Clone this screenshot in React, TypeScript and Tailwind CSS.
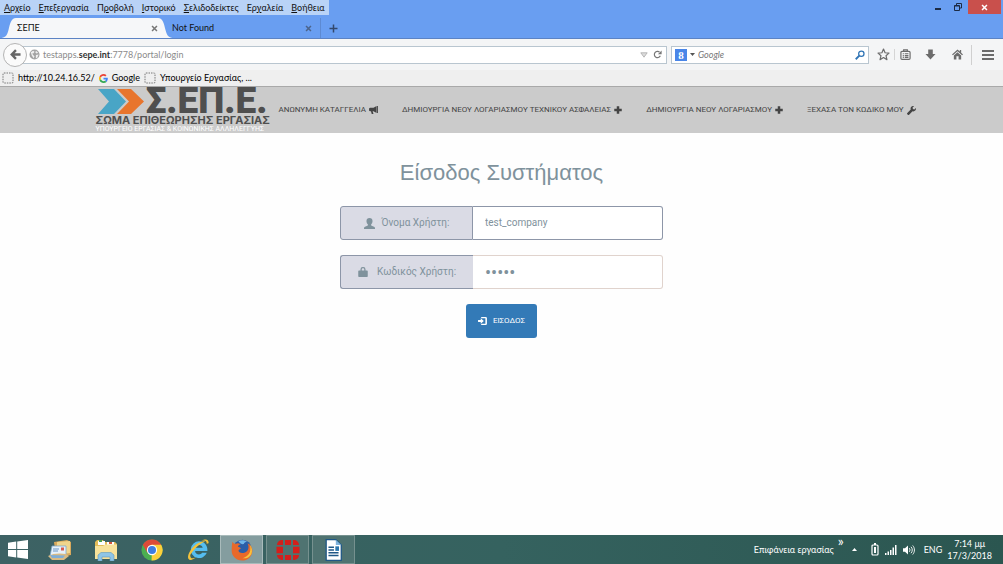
import React, { useState } from 'react';

interface IconProps {
    className?: string;
}

const MENU = [
    ['', 'Α', 'ρχείο'],
    ['', 'Ε', 'πεξεργασία'],
    ['Π', 'ρ', 'οβολή'],
    ['', 'Ι', 'στορικό'],
    ['', 'Σ', 'ελιδοδείκτες'],
    ['Ερ', 'γ', 'αλεία'],
    ['', 'Β', 'οήθεια'],
];

/* ---------- page icons ---------- */

const BullhornIcon = ({ className }: IconProps) => (
    <svg viewBox="0 0 20 18" className={className} fill="currentColor">
        <path d="M17 0v16L10 12H8l2 6H6L4.300 12H2.500A2.500 2.500 0 0 1 0 9.500V6.500a2.500 2.500 0 0 1 2.500-2.500H10z" />
        <path d="M18 0h2v16h-2z" />
    </svg>
);

const PlusIcon = ({ className }: IconProps) => (
    <svg viewBox="0 0 16 16" className={className} fill="currentColor">
        <path d="M5.500 0.500h5v5h5v5h-5v5h-5v-5h-5v-5h5z" />
    </svg>
);

const WrenchIcon = ({ className }: IconProps) => (
    <svg viewBox="0 0 20 20" className={className} fill="currentColor">
        <path d="M19.600 4.200 16.300 7.500l-3.200-.8-.7-3.200L15.600.300a5.800 5.800 0 0 0-7.300 7.400L.700 15.300a2 2 0 0 0 0 2.800l1.200 1.200a2 2 0 0 0 2.800 0l7.600-7.600a5.800 5.800 0 0 0 7.300-7.500z" />
    </svg>
);

const UserIcon = ({ className }: IconProps) => (
    <svg viewBox="0 0 20 20" className={className} fill="currentColor">
        <path d="M10 0c3.500 0 5.500 2 5.500 5.300 0 2.600-1 5-2.500 6.200v1.300c0 .7.300 1 .9 1.300l4.300 1.900c1.200.6 1.800 1.300 1.800 2.500V20H0v-1.500c0-1.200.6-1.900 1.800-2.500l4.300-1.900c.6-.3.900-.6.900-1.300v-1.300C5.500 10.300 4.500 7.900 4.500 5.300 4.500 2 6.500 0 10 0z" />
    </svg>
);

const LockIcon = ({ className }: IconProps) => (
    <svg viewBox="0 0 20 20" className={className} fill="currentColor">
        <path d="M5 7V4.500A4.500 4.500 0 0 1 9.500 0h1A4.500 4.500 0 0 1 15 4.500V7h3a1.500 1.500 0 0 1 1.500 1.500v10A1.500 1.500 0 0 1 18 20H2a1.500 1.500 0 0 1-1.500-1.500v-10A1.500 1.500 0 0 1 2 7zm2.500 0h5V4.500a2 2 0 0 0-2-2h-1a2 2 0 0 0-2 2z" />
    </svg>
);

const LoginIcon = ({ className }: IconProps) => (
    <svg viewBox="0 0 20 18" className={className} fill="currentColor">
        <path d="M7 0h10a3 3 0 0 1 3 3v12a3 3 0 0 1-3 3H7v-3h9.500V3H7z" />
        <path d="M0 7h6V3l7 6-7 6v-4H0z" />
    </svg>
);

/* ---------- browser icons ---------- */

const CloseIcon = ({ className }: IconProps) => (
    <svg viewBox="0 0 10 10" className={className} stroke="currentColor" strokeWidth="2.200" fill="none">
        <path d="M1.500 1.500l7 7M8.500 1.500l-7 7" />
    </svg>
);

const BackIcon = ({ className }: IconProps) => (
    <svg viewBox="0 0 12 12" className={className} stroke="currentColor" strokeWidth="2.600" fill="none">
        <path d="M11.500 6H2.500M6.500 1.300 1.900 6l4.600 4.700" />
    </svg>
);

const GlobeIcon = ({ className }: IconProps) => (
    <svg viewBox="0 0 12 12" className={className}>
        <circle cx="6" cy="6" r="5.500" fill="#a3a3a3" />
        <path d="M2 3.500l2.500-1.500 1.500 1-1 1.500-1.500.5 1 1.500 1.500 1.500-1 2L3 7zM7.500 2l2.500 2-1.500 1-1.500-1zM7.500 6.500l3-.5-1.500 3.500-1.500.5z" fill="#efefef" />
    </svg>
);

const ReloadIcon = ({ className }: IconProps) => (
    <svg viewBox="0 0 12 12" className={className} stroke="currentColor" strokeWidth="1.600" fill="none">
        <path d="M9.800 7.800A4.200 4.200 0 1 1 8.800 2.800" />
        <path d="M11.500.500v5h-5z" fill="currentColor" stroke="none" />
    </svg>
);

const SearchIcon = ({ className }: IconProps) => (
    <svg viewBox="0 0 12 12" className={className} stroke="currentColor" fill="none">
        <circle cx="7.600" cy="4.400" r="3.200" strokeWidth="1.500" />
        <path d="M5.200 6.800.900 11.100" strokeWidth="2.200" />
    </svg>
);

const StarIcon = ({ className }: IconProps) => (
    <svg viewBox="0 0 14 14" className={className} stroke="currentColor" strokeWidth="1.300" fill="none" strokeLinejoin="round">
        <path d="M7 1.200l1.700 3.900 4.200.4-3.200 2.800 1 4.200L7 10.300l-3.700 2.200 1-4.200L1.100 5.500l4.200-.4z" />
    </svg>
);

const ClipboardIcon = ({ className }: IconProps) => (
    <svg viewBox="0 0 12 12" className={className} stroke="currentColor" strokeWidth="1.300" fill="none">
        <rect x="1" y="2.500" width="10" height="8.800" rx="1.200" />
        <path d="M4 2.500V1h4v1.500M3 5.200h1.200M5.200 5.200H9.200M3 7.200h1.200M5.200 7.200H9.200M3 9.200h1.200M5.200 9.200H9.200" />
    </svg>
);

const DownloadIcon = ({ className }: IconProps) => (
    <svg viewBox="0 0 12 12" className={className} fill="currentColor">
        <path d="M3.500 .500h5v5h3L6 11.500.500 5.500h3z" />
    </svg>
);

const HomeIcon = ({ className }: IconProps) => (
    <svg viewBox="0 0 12 12" className={className} fill="currentColor">
        <path d="M6 .500l2.500 2.300V1.200h1.500V4.200L12 6l-1 .9L6 2.400 1 6.900 0 6z" />
        <path d="M2 7l4-3.500L10 7v4.500H7.200V8H4.800v3.500H2z" />
    </svg>
);

const GoogleG = ({ className }: IconProps) => (
    <svg viewBox="0 0 48 48" className={className}>
        <path fill="#ea4335" d="M24 9.500c3.500 0 6.700 1.200 9.200 3.600l6.900-6.900C35.900 2.400 30.500 0 24 0 14.600 0 6.500 5.400 2.600 13.200l8 6.200C12.400 13.700 17.700 9.500 24 9.500z" />
        <path fill="#4285f4" d="M47 24.600c0-1.600-.2-3.100-.4-4.600H24v9h12.900c-.6 3-2.200 5.500-4.700 7.200l7.700 6C44.400 38 47 31.800 47 24.600z" />
        <path fill="#fbbc05" d="M10.500 28.600a14.500 14.500 0 0 1 0-9.200l-8-6.200a24 24 0 0 0 0 21.600z" />
        <path fill="#34a853" d="M24 48c6.500 0 11.900-2.100 15.900-5.800l-7.700-6c-2.200 1.500-4.900 2.300-8.200 2.300-6.300 0-11.600-4.200-13.500-9.900l-8 6.200C6.500 42.600 14.600 48 24 48z" />
    </svg>
);

const BlankSiteIcon = () => (
    <svg viewBox="0 0 12 12" className="size-3 shrink-0">
        <rect x="1" y="1" width="10" height="10" rx="1" fill="none" stroke="#777" strokeDasharray="1.500 1" />
    </svg>
);

/* ---------- taskbar icons ---------- */

const WindowsIcon = () => (
    <svg viewBox="0 0 20 19" className="h-[19px] w-5" fill="#fff">
        <path d="M0 2.800 8.200 1.600v7.500H0zM9.200 1.500 20 0v9.100H9.200zM0 10h8.200v7.500L0 16.300zM9.200 10H20v9L9.200 17.500z" />
    </svg>
);

const MailIcon = () => (
    <svg viewBox="0 0 24 20" className="h-5 w-6">
        <path d="M6 2l13-2 4 2v13l-15 3z" fill="#d9a95c" />
        <path d="M9 2l13-1v12L9 15z" fill="#f0d58c" />
        <path d="M4 6l14 0v10H2z" fill="#e6f1fa" stroke="#7da7cc" strokeWidth=".8" />
        <path d="M5 9h6M5 11h5" stroke="#6b96c6" />
        <rect x="13" y="7.500" width="3" height="3" fill="#d95a50" />
        <path d="M0 16c5-3 13-3 18-2l3 2-5 4H4z" fill="#d9bb84" />
        <path d="M2 15l15 .5-2 2.500H4z" fill="#80aed6" />
    </svg>
);

const ExplorerIcon = () => (
    <svg viewBox="0 0 24 22" className="h-[22px] w-6">
        <path d="M1 3l2-2h6l1 2h11l2 2v15H1z" fill="#e4bd59" />
        <path d="M4 2h7v4H4zM13 3h7v4h-7z" fill="#fff" />
        <path d="M5 1h3v2H5z" fill="#4aa34f" />
        <path d="M15 3h3v2h-3z" fill="#d3563e" />
        <path d="M1 7h8l2-1.500h12V20H1z" fill="#f8e29a" />
        <path d="M4 22v-6l3-2.500h10l3 2.500v6h-4v-4H8v4z" fill="#8fc5e6" stroke="#5e98bd" strokeWidth=".6" />
    </svg>
);

const ChromeIcon = () => (
    <svg viewBox="0 0 24 24" className="size-[22px]">
        <circle cx="12" cy="12" r="11.500" fill="#4caf50" />
        <path d="M12 12 2 6.300A11.500 11.500 0 0 1 22 6.200z" fill="#dd4b39" />
        <path d="M12 12V6.200h10A11.500 11.500 0 0 1 11.500 23.500z" fill="#fcd03b" />
        <path d="M2 6.300l5 8.600L12 12V6.200z" fill="#dd4b39" />
        <circle cx="12" cy="12" r="5.600" fill="#fff" />
        <circle cx="12" cy="12" r="4.400" fill="#3f7de0" />
    </svg>
);

const ExplorerEIcon = () => (
    <svg viewBox="0 0 24 24" className="size-[23px]">
        <path d="M12.500 3.500a8.700 8.700 0 1 0 8.200 12h-4.900c-.8 1.100-1.900 1.600-3.300 1.600-2.300 0-3.900-1.400-4.100-3.600H21.300c.4-5.700-3.200-10-8.800-10zM8.500 10.300c.4-1.900 1.900-3 4-3s3.600 1.100 3.900 3z" fill="#55bdf0" />
        <path d="M22.500 5.500C23 1.500 19.500.500 15 3c3.500-1 5.800-.4 5.500 3M3 14C-.500 20 1 24 5 22.600c1.500-.5 3-1.300 4.500-2.500-4 2-6.600 1.200-6-2.600C9 9 15 4.500 20 3c-7 0-14 5-17 11z" fill="#f2c23c" />
    </svg>
);

const FirefoxIcon = () => (
    <svg viewBox="0 0 24 24" className="size-[22px]">
        <circle cx="12.500" cy="10.500" r="9.800" fill="#2b5da8" />
        <path d="M8 2.500c3-1.800 7-1.500 9.500.5-2 0-3 1-3.500 2.500-2 .5-4-.5-6-3z" fill="#6fb4e8" />
        <path d="M1.500 3c.8 1.500 2 2.300 3.600 2.200C7 4.300 9 4.500 10.500 6c-1.800.3-2.800 1-3 2.500 1.500.3 3 1 3.300 2.200-1.200.3-2.500 1-2.600 2.300.8 2.600 5.500 3 8.800.5 2.700-2.300 2.600-6 1-9C21.500 6 23.500 9.500 23.300 13c-.4 6-5 10.500-11.300 10.500C5.500 23.500.700 18.500.700 12.500c0-3.500.3-6.500.8-9.500z" fill="#e8692a" />
        <path d="M20.500 6c2.500 3.500 3 7 1.700 10.500-2 3.500-5.700 5-9.700 4.500 4.500-1.500 8-4.500 8.500-8.500.3-2.300.2-4.500-.5-6.500z" fill="#f9c23c" />
    </svg>
);

const RedGridIcon = () => (
    <svg viewBox="0 0 24 22" className="h-[22px] w-6" fill="#d51f1b">
        <path d="M1 6a5 5 0 0 1 5-5h1v5H1zM9 1h6v5H9zM17 1h1a5 5 0 0 1 5 5h-6zM.500 7.700H7v6.600H.500zM17 7.700h6.500v6.600H17zM1 16h6v5H6a5 5 0 0 1-5-5zM9 16h6v5H9zM17 16h6a5 5 0 0 1-5 5h-1z" />
    </svg>
);

const WriterIcon = () => (
    <svg viewBox="0 0 20 24" className="h-[22px] w-[19px]">
        <path d="M2 .700h10.500L18.500 6.500v16.800H2z" fill="#fff" stroke="#1f5786" strokeWidth="1.400" />
        <path d="M12.500.700v5.800h6z" fill="#7fb3dc" />
        <path d="M4.500 9h6M4.500 12h6M4.500 15h11M4.500 18h11" stroke="#1f5786" strokeWidth="1.500" />
        <path d="M12 8h4v5h-4z" fill="#2c77ad" />
    </svg>
);

const BatteryIcon = () => (
    <svg viewBox="0 0 8 13" className="h-[13px] w-2">
        <rect x="1" y="2" width="6" height="10" rx="1" fill="none" stroke="#fff" strokeWidth="1.200" />
        <path d="M3 0h2v2H3zM3 4h2v6H3z" fill="#fff" />
    </svg>
);

const SignalIcon = () => (
    <svg viewBox="0 0 12 10" className="h-[10px] w-3" fill="#fff">
        <path d="M0 8h1.500v2H0zM2.500 6.500H4V10H2.500zM5 5h1.500v5H5zM7.500 2.500H9V10H7.500zM10 0h1.500v10H10z" />
    </svg>
);

const SpeakerIcon = () => (
    <svg viewBox="0 0 12 10" className="h-[10px] w-3">
        <path d="M0 3.200h2L5 .500v9L2 6.800H0z" fill="#fff" />
        <path d="M6.300 3.200c.9 1 .9 2.600 0 3.600M8 1.800c1.700 1.800 1.700 4.600 0 6.400M9.700.500c2.300 2.600 2.300 6.400 0 9" stroke="#fff" fill="none" strokeWidth=".9" />
    </svg>
);

/* ---------- sections ---------- */

const TitleArea = () => (
    <div className="border-b border-[#5c83c4] bg-[#699ef1]">
        <div className="flex h-[15px] items-start justify-between">
            <div className="flex h-[15px] items-center gap-2 bg-[#b9d3f7] pr-1 pl-1">
                {MENU.map(([before, key, after]) => (
                    <button key={after} type="button" className="whitespace-nowrap">
                        {before}
                        <u>{key}</u>
                        {after}
                    </button>
                ))}
            </div>
            <div className="flex">
                <button type="button" aria-label="Ελαχιστοποίηση" className="flex h-[14px] w-5 items-center justify-center">
                    <span className="mt-1 h-[2px] w-[6px] bg-[#1c2b44]" />
                </button>
                <button type="button" aria-label="Επαναφορά" className="flex h-[14px] w-5 items-center justify-center">
                    <svg viewBox="0 0 8 8" className="size-2" fill="none" stroke="#1c2b44">
                        <path d="M2.500 2V.500h5v4.500H6M.500 2.500H5.500v5h-5zM.500 3h5" />
                    </svg>
                </button>
                <button type="button" aria-label="Κλείσιμο" className="mr-[2px] flex h-[14px] w-[33px] items-center justify-center bg-[#c9504c] text-white">
                    <CloseIcon className="size-[7px]" />
                </button>
            </div>
        </div>
        <div className="flex h-[23px] items-end">
            <svg viewBox="0 0 16 20" className="h-5 w-4 shrink-0" fill="#f6f7f9">
                <path d="M0 20c5 0 7-2 8.500-8S11 0 16 0v20z" />
            </svg>
            <div className="flex h-5 w-[142px] items-center justify-between bg-[#f6f7f9] pl-[1px]">
                <span>ΣΕΠΕ</span>
                <button type="button" aria-label="Κλείσιμο καρτέλας" className="text-[#777]">
                    <CloseIcon className="size-[7px]" />
                </button>
            </div>
            <svg viewBox="0 0 16 20" className="h-5 w-4 shrink-0" fill="#f6f7f9">
                <path d="M16 20C11 20 9 18 7.500 12S5 0 0 0v20z" />
            </svg>
            <div className="flex h-5 w-[138px] items-center justify-between">
                <span className="-ml-[2px]">Not Found</span>
                <button type="button" aria-label="Κλείσιμο καρτέλας" className="text-[#4c648c]">
                    <CloseIcon className="size-[7px]" />
                </button>
            </div>
            <button type="button" aria-label="Νέα καρτέλα" className="ml-2 flex h-5 items-center border-l border-[#5d8ad2] pl-2 text-[#33486d]">
                <svg viewBox="0 0 9 9" className="size-[9px]" stroke="currentColor" strokeWidth="1.500">
                    <path d="M4.500.500v8M.500 4.500h8" />
                </svg>
            </button>
        </div>
    </div>
);

const Toolbar = () => {
    const [search, setSearch] = useState('');

    return (
        <div className="flex h-[31px] items-center bg-[#f4f5f6] pr-[9px] text-[#6c6c6c]">
            <button type="button" aria-label="Πίσω" className="z-10 ml-[3px] flex size-6 shrink-0 items-center justify-center rounded-full border border-[#b4b4b4] bg-[#fbfbfb] text-[#666]">
                <BackIcon className="size-[11px]" />
            </button>
            <div className="-ml-2 flex h-[18px] flex-1 items-center border border-[#b9c6d0] bg-white pr-1 pl-[9px] text-[#8b8b8b]">
                <GlobeIcon className="mr-[3px] size-[11px]" />
                <span className="flex-1">
                    testapps.<span className="font-bold text-[#333]">sepe.int</span>:7778/portal/login
                </span>
                <svg viewBox="0 0 8 6" className="mr-[5px] h-[6px] w-2" fill="#ddd" stroke="#aaa" strokeWidth=".8">
                    <path d="M.800.800h6.400L4 5.200z" />
                </svg>
                <button type="button" aria-label="Ανανέωση" className="text-[#777]">
                    <ReloadIcon className="size-[9px]" />
                </button>
            </div>
            <div className="ml-1 flex h-[18px] w-[198px] items-center border border-[#b9c6d0] bg-white px-[3px]">
                <span className="flex size-3 items-center justify-center bg-[#4a86e8] font-['Liberation_Serif',serif] text-[11px] leading-3 font-bold text-white">8</span>
                <svg viewBox="0 0 5 3" className="mx-[3px] h-[3px] w-[5px]" fill="#555">
                    <path d="M0 0h5L2.500 3z" />
                </svg>
                <input
                    type="text"
                    aria-label="Αναζήτηση"
                    placeholder="Google"
                    value={search}
                    onChange={(e) => setSearch(e.target.value)}
                    className="min-w-0 flex-1 text-black outline-none placeholder:text-[#777] placeholder:italic"
                />
                <button type="button" aria-label="Εύρεση" className="text-[#2f74b5]">
                    <SearchIcon className="size-[10px]" />
                </button>
            </div>
            <button type="button" aria-label="Σελιδοδείκτης" className="ml-2">
                <StarIcon className="size-[13px]" />
            </button>
            <button type="button" aria-label="Λίστα σελιδοδεικτών" className="ml-1 border-l border-[#d5d5d5] pl-[5px]">
                <ClipboardIcon className="size-[11px]" />
            </button>
            <button type="button" aria-label="Λήψεις" className="ml-[14px]">
                <DownloadIcon className="size-[11px]" />
            </button>
            <button type="button" aria-label="Αρχική" className="ml-4">
                <HomeIcon className="size-[11px]" />
            </button>
            <button type="button" aria-label="Μενού" className="ml-2 flex h-5 items-center border-l border-[#d0d0d0] pl-[10px]">
                <svg viewBox="0 0 12 10" className="h-[10px] w-3" fill="currentColor">
                    <path d="M0 0h12v2H0zM0 4h12v2H0zM0 8h12v2H0z" />
                </svg>
            </button>
        </div>
    );
};

const Bookmarks = () => (
    <div className="flex h-[17px] items-center border-b border-[#a9a9a9] bg-[#efefef] px-[2px] text-black">
        <a href="#ip" className="flex items-center gap-1">
            <BlankSiteIcon />
            http://10.24.16.52/
        </a>
        <a href="#google" className="ml-1 flex items-center gap-1">
            <GoogleG className="size-[9px]" />
            Google
        </a>
        <a href="#ypourgeio" className="ml-1 flex items-center gap-1">
            <BlankSiteIcon />
            Υπουργείο Εργασίας, ...
        </a>
    </div>
);

const Logo = () => (
    <a href="#home" className="block w-[172px] shrink-0 whitespace-nowrap text-[#4f4f4f]">
        <div className="flex h-7 items-center">
            <svg viewBox="0 0 50 27" className="h-[27px] w-[50px] shrink-0">
                <path d="M2 1h16l12 12.500L18 26H2l11-12.500z" fill="#49a5c6" />
                <path d="M21 1h14l13 12.500L35 26H21l12-12.500z" fill="#e8752d" />
            </svg>
            <span className="text-[37px] leading-7 font-black">Σ.ΕΠ.Ε.</span>
        </div>
        <div className="font-['Inter',sans-serif] text-[11px] leading-[11px] font-bold">ΣΩΜΑ ΕΠΙΘΕΩΡΗΣΗΣ ΕΡΓΑΣΙΑΣ</div>
        <div className="text-[7px] leading-[7px] text-white">ΥΠΟΥΡΓΕΙΟ ΕΡΓΑΣΙΑΣ &amp; ΚΟΙΝΩΝΙΚΗΣ ΑΛΛΗΛΕΓΓΥΗΣ</div>
    </a>
);

const SiteHeader = () => (
    <header className="bg-[#cbcbcb] font-['Roboto',sans-serif]">
        <div className="mx-auto flex h-[46px] max-w-[860px] items-center pl-6">
            <Logo />
            <nav className="ml-[11px] flex items-center gap-6 text-[8px] leading-3 whitespace-nowrap text-[#444]">
                <a href="#complaint" className="flex items-center gap-[3px]">
                    ΑΝΩΝΥΜΗ ΚΑΤΑΓΓΕΛΙΑ <BullhornIcon className="h-2 w-[9px]" />
                </a>
                <a href="#new-technician" className="flex items-center gap-[3px]">
                    ΔΗΜΙΟΥΡΓΙΑ ΝΕΟΥ ΛΟΓΑΡΙΑΣΜΟΥ ΤΕΧΝΙΚΟΥ ΑΣΦΑΛΕΙΑΣ <PlusIcon className="size-2" />
                </a>
                <a href="#new-account" className="flex items-center gap-[3px]">
                    ΔΗΜΙΟΥΡΓΙΑ ΝΕΟΥ ΛΟΓΑΡΙΑΣΜΟΥ <PlusIcon className="size-2" />
                </a>
                <a href="#forgot" className="flex items-center gap-[3px]">
                    ΞΕΧΑΣΑ ΤΟΝ ΚΩΔΙΚΟ ΜΟΥ <WrenchIcon className="size-[9px]" />
                </a>
            </nav>
        </div>
    </header>
);

const LoginForm = () => {
    const [username, setUsername] = useState('test_company');
    const [password, setPassword] = useState('12345');

    const handleSubmit = (e: React.FormEvent) => {
        e.preventDefault();
    };

    return (
        <main className="flex flex-1 flex-col items-center bg-[#fefefe] pt-6 text-[#7f929c]">
            <h1 className="font-['Liberation_Sans',sans-serif] text-[22px] leading-8">Είσοδος Συστήματος</h1>
            <form onSubmit={handleSubmit} className="mt-[17px] flex w-full max-w-[323px] flex-col items-center gap-[15px] font-['Roboto',sans-serif] text-[10px]">
                <div className="flex h-[34px] w-full">
                    <label htmlFor="username" className="flex w-[133px] items-center justify-center gap-[7px] rounded-l-[3px] border border-[#8d96a8] bg-[#dadbe5]">
                        <UserIcon className="size-[11px]" />
                        Όνομα Χρήστη:
                    </label>
                    <input
                        id="username"
                        type="text"
                        value={username}
                        onChange={(e) => setUsername(e.target.value)}
                        className="min-w-0 flex-1 rounded-r-[3px] border border-l-0 border-[#8d96a8] bg-white px-3 outline-none"
                    />
                </div>
                <div className="flex h-[34px] w-full">
                    <label htmlFor="password" className="flex w-[133px] items-center justify-center gap-[9px] rounded-l-[3px] border border-r-0 border-[#8d96a8] bg-[#dadbe5]">
                        <LockIcon className="size-[10px]" />
                        Κωδικός Χρήστη:
                    </label>
                    <input
                        id="password"
                        type="password"
                        value={password}
                        onChange={(e) => setPassword(e.target.value)}
                        className="min-w-0 flex-1 rounded-r-[3px] border border-l-0 border-[#e0d3cd] bg-white px-3 text-[18px] outline-none"
                    />
                </div>
                <button type="submit" className="flex h-[34px] items-center gap-[6px] rounded-[3px] bg-[#337ab7] px-3 text-[8px] text-white">
                    <LoginIcon className="h-2 w-[9px]" />
                    ΕΙΣΟΔΟΣ
                </button>
            </form>
        </main>
    );
};

const Taskbar = () => (
    <footer className="flex h-[29px] items-center bg-gradient-to-r from-[#3d6264] via-[#35625f] to-[#2b5650] text-white">
        <div className="flex h-full items-center">
            <button type="button" aria-label="Έναρξη" className="flex w-9 justify-center"><WindowsIcon /></button>
            <button type="button" aria-label="Αλληλογραφία" className="flex w-12 justify-center"><MailIcon /></button>
            <button type="button" aria-label="Εξερεύνηση" className="flex w-11 justify-center"><ExplorerIcon /></button>
            <button type="button" aria-label="Chrome" className="flex w-12 justify-center"><ChromeIcon /></button>
            <button type="button" aria-label="Internet Explorer" className="flex w-11 justify-center"><ExplorerEIcon /></button>
            <button type="button" aria-label="Firefox" className="flex h-[29px] w-[43px] items-center justify-center border border-[#a9bbbb] bg-[#849d9f]"><FirefoxIcon /></button>
            <button type="button" aria-label="FortiClient" className="ml-[3px] flex h-[29px] w-[43px] items-center justify-center border border-[#76918f] bg-[#4f7371]"><RedGridIcon /></button>
            <button type="button" aria-label="Writer" className="ml-[3px] flex h-[29px] w-[43px] items-center justify-center border border-[#76918f] bg-[#4f7371]"><WriterIcon /></button>
        </div>
        <div className="ml-auto flex h-full items-center pr-[11px]">
            <span>Επιφάνεια εργασίας</span>
            <span className="ml-1 self-start text-[14px] leading-3">»</span>
            <svg viewBox="0 0 5 3" className="ml-2 h-[3px] w-[5px]" fill="#fff">
                <path d="M0 3h5L2.500 0z" />
            </svg>
            <div className="ml-[14px] flex items-center gap-[6px]">
                <BatteryIcon />
                <SignalIcon />
                <SpeakerIcon />
            </div>
            <span className="ml-[9px]">ENG</span>
            <div className="ml-[5px] text-center leading-3">
                <div>7:14 μμ</div>
                <div>17/3/2018</div>
            </div>
        </div>
    </footer>
);

const App: React.FC = () => {
    return (
        <div className="flex min-h-screen flex-col font-['Lato','Noto_Sans',sans-serif] text-[9px] leading-3 text-[#111]">
            <TitleArea />
            <Toolbar />
            <Bookmarks />
            <SiteHeader />
            <LoginForm />
            <Taskbar />
        </div>
    );
};

export default App;
